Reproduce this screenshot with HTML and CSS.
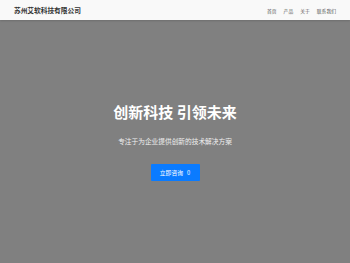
FILE: index.html
```html
<!DOCTYPE html>
<html lang="zh-CN">
<head>
    <meta charset="UTF-8">
    <meta name="viewport" content="width=device-width, initial-scale=1.0">
    <title>苏州艾软科技有限公司</title>
    <link rel="stylesheet" href="styles.css">
</head>
<body>
    <div class="page">
        <div class="header">
            <a href="##" class="logo">苏州艾软科技有限公司</a>
            <div class="nav-links">
                <a href="##" class="nav-link">首页</a>
                <a href="##" class="nav-link">产品</a>
                <a href="##" class="nav-link">关于</a>
                <a href="##" class="nav-link">联系我们</a>
            </div>
        </div>

        <div class="hero">
            <h1 class="hero-title">创新科技 引领未来</h1>
            <p class="hero-text">专注于为企业提供创新的技术解决方案</p>
            <a href="##" class="hero-button">立即咨询 <span class="hero-icon">0</span></a>
        </div>
    </div>
</body>
</html>
```

FILE: styles.css
```css
*{
    padding: 0;
    margin: 0;
    box-sizing: border-box;
}

html, body{
    height: 100%;
}

body{
    font-family: "Noto Sans CJK SC", "Noto Sans", sans-serif;
    background-color: #808080;
}

a{
    text-decoration: none;
    color: #000;
}

.page{
    height: 100%;
    display: flex;
    flex-direction: column;
}

/* ==================头部===================== */
.header{
    height: 20px;
    padding: 0 14px;
    display: flex;
    align-items: center;
    justify-content: space-between;
    background-color: #f9f9f9;
    box-shadow: 0 1px 2px rgba(0, 0, 0, 0.15);
    position: relative;
}

.header .logo{
    font-size: 6.7px;
    font-weight: bold;
    color: #333;
}

.header .nav-links{
    display: flex;
    gap: 7px;
}

.header .nav-links .nav-link{
    font-size: 4.8px;
    color: #555;
}

/* ==================主视觉===================== */
.hero{
    flex: 1;
    display: flex;
    flex-direction: column;
    align-items: center;
    justify-content: center;
    color: #fff;
}

.hero .hero-title{
    font-size: 15px;
    line-height: 18px;
    font-weight: bold;
}

.hero .hero-text{
    margin-top: 15px;
    font-size: 6.7px;
    line-height: 10px;
    color: #f0f0f0;
}

.hero .hero-button{
    margin-top: 18px;
    width: 49px;
    height: 17px;
    display: flex;
    align-items: center;
    justify-content: center;
    gap: 4px;
    background-color: #0a7bff;
    border-radius: 1px;
    color: #fff;
    font-size: 5.8px;
}
```
